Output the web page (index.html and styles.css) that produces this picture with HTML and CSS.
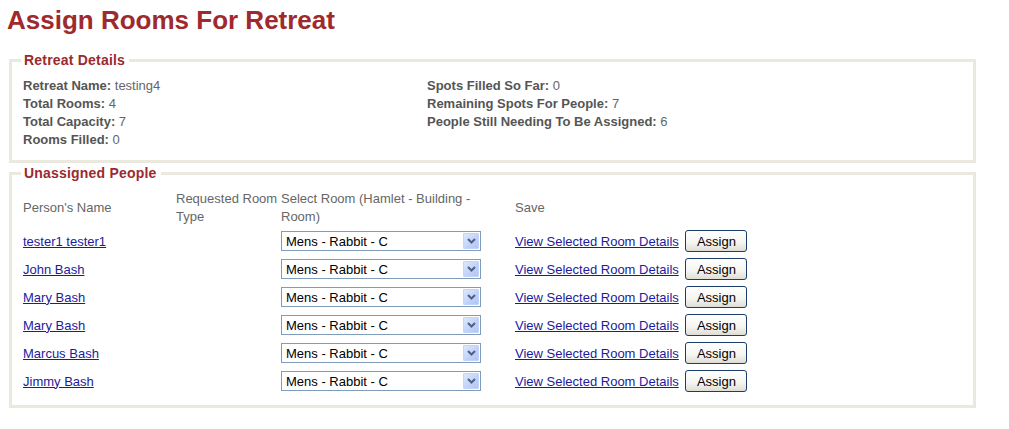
FILE: index.html
```html
<!DOCTYPE html>
<html>
<head>
<meta charset="utf-8">
<title>Assign Rooms For Retreat</title>
<link rel="stylesheet" href="styles.css">
</head>
<body>
<h1 class="title">Assign Rooms For Retreat</h1>

<fieldset class="box">
  <legend class="box-legend">Retreat Details</legend>
  <div class="details">
    <div class="details-col">
      <div class="line"><span class="lbl">Retreat Name:</span> testing4</div>
      <div class="line"><span class="lbl">Total Rooms:</span> 4</div>
      <div class="line"><span class="lbl">Total Capacity:</span> 7</div>
      <div class="line"><span class="lbl">Rooms Filled:</span> 0</div>
    </div>
    <div class="details-col">
      <div class="line"><span class="lbl">Spots Filled So Far:</span> 0</div>
      <div class="line"><span class="lbl">Remaining Spots For People:</span> 7</div>
      <div class="line"><span class="lbl">People Still Needing To Be Assigned:</span> 6</div>
    </div>
  </div>
</fieldset>

<fieldset class="box box-people">
  <legend class="box-legend">Unassigned People</legend>
  <table class="people">
    <colgroup>
      <col class="c-name"><col class="c-type"><col class="c-room"><col class="c-save">
    </colgroup>
    <thead>
      <tr>
        <th>Person's Name</th>
        <th>Requested Room Type</th>
        <th class="th-room">Select Room (Hamlet - Building - Room)</th>
        <th>Save</th>
      </tr>
    </thead>
    <tbody>
      <tr>
        <td><a href="#" class="lnk">tester1 tester1</a></td>
        <td></td>
        <td><span class="sel"><select class="sel-box"><option>Mens - Rabbit - C</option></select><span class="sel-arrow"><svg width="9" height="6" viewBox="0 0 9 6"><path d="M1 1 L4.5 4.5 L8 1" fill="none" stroke="#4d6185" stroke-width="2"/></svg></span></span></td>
        <td><a href="#" class="lnk lnk-mid">View Selected Room Details</a> <button class="btn">Assign</button></td>
      </tr>
      <tr>
        <td><a href="#" class="lnk">John Bash</a></td>
        <td></td>
        <td><span class="sel"><select class="sel-box"><option>Mens - Rabbit - C</option></select><span class="sel-arrow"><svg width="9" height="6" viewBox="0 0 9 6"><path d="M1 1 L4.5 4.5 L8 1" fill="none" stroke="#4d6185" stroke-width="2"/></svg></span></span></td>
        <td><a href="#" class="lnk lnk-mid">View Selected Room Details</a> <button class="btn">Assign</button></td>
      </tr>
      <tr>
        <td><a href="#" class="lnk">Mary Bash</a></td>
        <td></td>
        <td><span class="sel"><select class="sel-box"><option>Mens - Rabbit - C</option></select><span class="sel-arrow"><svg width="9" height="6" viewBox="0 0 9 6"><path d="M1 1 L4.5 4.5 L8 1" fill="none" stroke="#4d6185" stroke-width="2"/></svg></span></span></td>
        <td><a href="#" class="lnk lnk-mid">View Selected Room Details</a> <button class="btn">Assign</button></td>
      </tr>
      <tr>
        <td><a href="#" class="lnk">Mary Bash</a></td>
        <td></td>
        <td><span class="sel"><select class="sel-box"><option>Mens - Rabbit - C</option></select><span class="sel-arrow"><svg width="9" height="6" viewBox="0 0 9 6"><path d="M1 1 L4.5 4.5 L8 1" fill="none" stroke="#4d6185" stroke-width="2"/></svg></span></span></td>
        <td><a href="#" class="lnk lnk-mid">View Selected Room Details</a> <button class="btn">Assign</button></td>
      </tr>
      <tr>
        <td><a href="#" class="lnk">Marcus Bash</a></td>
        <td></td>
        <td><span class="sel"><select class="sel-box"><option>Mens - Rabbit - C</option></select><span class="sel-arrow"><svg width="9" height="6" viewBox="0 0 9 6"><path d="M1 1 L4.5 4.5 L8 1" fill="none" stroke="#4d6185" stroke-width="2"/></svg></span></span></td>
        <td><a href="#" class="lnk lnk-mid">View Selected Room Details</a> <button class="btn">Assign</button></td>
      </tr>
      <tr>
        <td><a href="#" class="lnk">Jimmy Bash</a></td>
        <td></td>
        <td><span class="sel"><select class="sel-box"><option>Mens - Rabbit - C</option></select><span class="sel-arrow"><svg width="9" height="6" viewBox="0 0 9 6"><path d="M1 1 L4.5 4.5 L8 1" fill="none" stroke="#4d6185" stroke-width="2"/></svg></span></span></td>
        <td><a href="#" class="lnk lnk-mid">View Selected Room Details</a> <button class="btn">Assign</button></td>
      </tr>
    </tbody>
  </table>
</fieldset>
</body>
</html>
```
FILE: styles.css
```css
html, body {
  background: #ffffff;
}
body {
  margin: 0;
  padding: 0 7px;
  font-family: "Liberation Sans", Arial, sans-serif;
  font-size: 13px;
  color: #666666;
}
.title {
  margin: 5px 0 17px 0;
  font-size: 26px;
  line-height: 30px;
  font-weight: bold;
  color: #9e2a2d;
}
.box {
  box-sizing: border-box;
  width: 967px;
  margin: 0 0 0 2px;
  padding: 9px 11px 11px 11px;
  border: 3px solid #ebe9dd;
  min-width: 0;
}
.box-people {
  margin-top: 2px;
  padding-top: 9px;
  padding-bottom: 10px;
}
.box-legend {
  margin-left: -2px;
  padding: 0 4px 0 3px;
  font-size: 14px;
  line-height: 16px;
  font-weight: bold;
  letter-spacing: 0.2px;
  color: #9b2a2e;
}
.details {
  display: grid;
  grid-template-columns: 404px 1fr;
}
.line {
  line-height: 18px;
  color: #666666;
}
.lbl {
  font-weight: bold;
  color: #555555;
}
.people {
  border-collapse: collapse;
  border-spacing: 0;
  table-layout: fixed;
  width: 700px;
}
.c-name { width: 153px; }
.c-type { width: 105px; }
.c-room { width: 234px; }
.c-save { width: 208px; }
.people th {
  font-weight: normal;
  text-align: left;
  color: #666666;
  line-height: 18px;
  height: 36px;
  padding: 0 0 1px 0;
  vertical-align: middle;
}
.people th.th-room {
  padding-right: 34px;
}
.people td {
  height: 28px;
  padding: 0;
  vertical-align: middle;
  white-space: nowrap;
}
.lnk {
  color: #1b1b9c;
  text-decoration: underline;
}
.lnk-mid {
  vertical-align: middle;
}
.sel {
  position: relative;
  display: inline-block;
  vertical-align: middle;
}
.sel-box {
  -webkit-appearance: none;
  appearance: none;
  display: block;
  box-sizing: border-box;
  width: 200px;
  height: 20px;
  margin: 0;
  padding: 0 0 0 4px;
  border: 1px solid #7f9db9;
  border-radius: 0;
  background: #ffffff;
  font-family: "Liberation Sans", Arial, sans-serif;
  font-size: 13px;
  color: #000000;
}
.sel-arrow {
  position: absolute;
  top: 2px;
  right: 2px;
  width: 16px;
  height: 16px;
  box-sizing: border-box;
  border: 1px solid #c3d3fd;
  border-radius: 1px;
  background: linear-gradient(135deg, #dde7fd 0%, #c0d1f9 60%, #b3c6f3 100%);
  display: flex;
  align-items: center;
  justify-content: center;
  pointer-events: none;
}
.btn {
  -webkit-appearance: none;
  appearance: none;
  box-sizing: border-box;
  width: 62px;
  height: 22px;
  margin: 0 0 0 3px;
  padding: 0;
  border: 1px solid #1c3d6c;
  border-radius: 3px;
  background: linear-gradient(#ffffff 0%, #f4f4f0 60%, #dedcd4 100%);
  font-family: "Liberation Sans", Arial, sans-serif;
  font-size: 13px;
  color: #000000;
  vertical-align: middle;
}
```
